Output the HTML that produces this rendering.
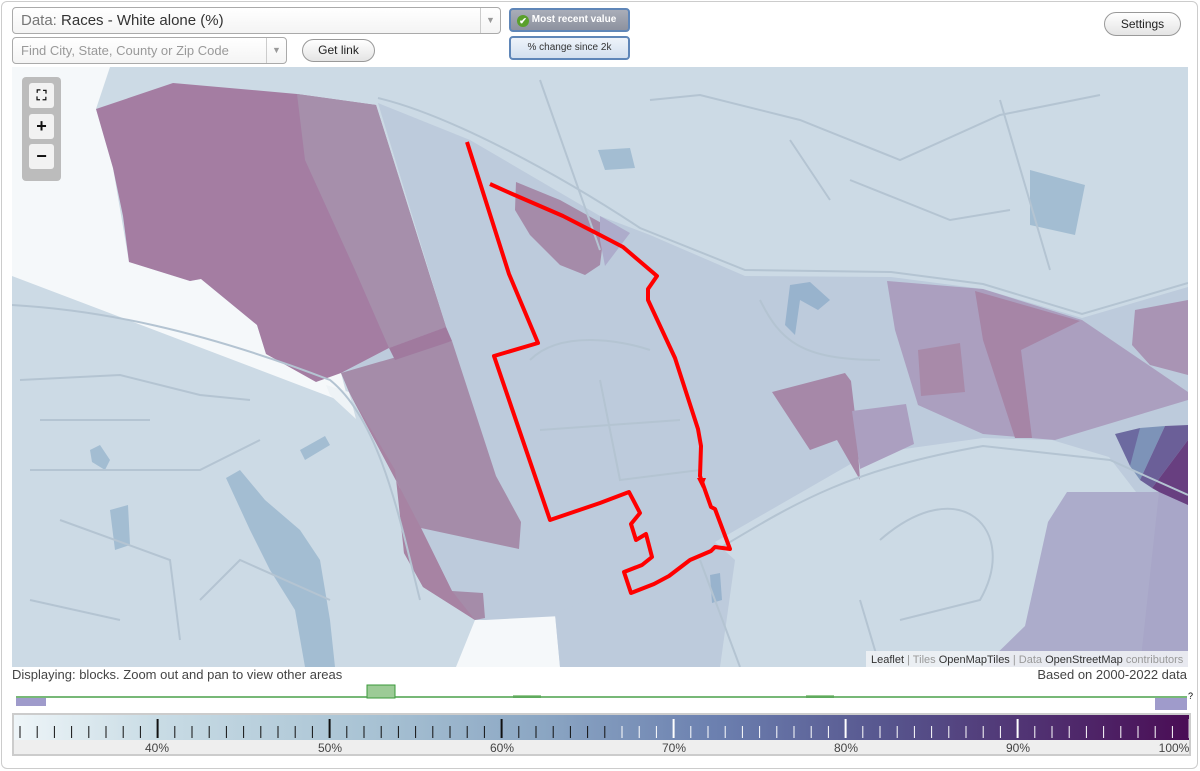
<!DOCTYPE html>
<html><head><meta charset="utf-8"><style>
*{box-sizing:border-box}
body{margin:0;width:1200px;height:771px;background:#fff;font-family:"Liberation Sans",sans-serif;position:relative;overflow:hidden}
.frame{position:absolute;left:1px;top:1px;width:1197px;height:768px;border:1px solid #ccc;border-radius:6px}
.abs{position:absolute}
.sel{border:1px solid #aaa;border-radius:4px;background:linear-gradient(#fff,#f4f4f4)}
.arr{position:absolute;right:0;top:0;bottom:0;width:20px;border-left:1px solid #ccc;color:#999;font-size:9px;text-align:center}
.btn{border:1px solid #999;border-radius:12px;background:linear-gradient(#fff,#e4e4e4);font-size:12px;text-align:center;color:#222}
.zb{position:absolute;left:7px;width:25px;height:25px;background:#f2f2f2;border-radius:3px;font-weight:bold;font-size:18px;text-align:center;line-height:24px;color:#111}
</style></head><body>
<div class="frame"></div>
<div class="abs sel" style="left:12px;top:7px;width:489px;height:27px;font-size:15px;line-height:25px;padding-left:8px"><span style="color:#777">Data:</span> <span style="color:#333">Races - White alone (%)</span><div class="arr" style="line-height:25px">▼</div></div>
<div class="abs sel" style="left:12px;top:37px;width:275px;height:27px;font-size:13px;line-height:25px;padding-left:8px;color:#999">Find City, State, County or Zip Code<div class="arr" style="line-height:25px">▼</div></div>
<div class="abs btn" style="left:302px;top:39px;width:73px;height:23px;line-height:21px">Get link</div>
<div class="abs" style="left:509px;top:8px;width:121px;height:24px;border:2px solid #5f86b8;border-radius:4px;background:linear-gradient(#a9adb8,#8d929f);color:#fff;font-size:10px;font-weight:bold;line-height:20px;padding-left:6px"><span style="display:inline-block;width:12px;height:12px;border-radius:6px;background:#5aa02c;color:#fff;font-size:9px;line-height:12px;text-align:center;vertical-align:-2px">✔</span> Most recent value</div>
<div class="abs" style="left:509px;top:36px;width:121px;height:24px;border:2px solid #5f86b8;border-radius:4px;background:linear-gradient(#eef3fa,#d3e0ef);color:#333;font-size:10px;line-height:20px;text-align:center">% change since 2k</div>
<div class="abs btn" style="left:1104px;top:12px;width:77px;height:24px;line-height:22px">Settings</div>

<svg class="abs" style="left:12px;top:67px" width="1176" height="600" viewBox="12 67 1176 600">
<rect x="12" y="67" width="1176" height="600" fill="#ccdae5"/>
<!-- white areas -->
<polygon points="12,67 110,67 96,109 113,168 129,262 190,281 201,279 257,325 266,354 341,373 349,404 12,276" fill="#f5f8fa"/>
<polygon points="326,385 349,392 356,419 330,395" fill="#eef3f6"/>
<polygon points="456,667 475,620 555,614 560,667" fill="#f5f8fa"/>
<!-- block region -->
<polygon points="378,103 470,140 600,216 650,235 745,276 891,277 983,289 1082,318 1188,287 1188,492 1136,492 1109,457 1052,440 983,438 868,454 715,542 600,614 485,620 475,620 452,591 421,528 400,488 395,455 349,392 341,373 389,348 446,327" fill="#bdcbdc"/>
<polygon points="555,614 715,542 735,560 720,667 560,667" fill="#bdcbdc"/>
<!-- lower right purple area -->
<polygon points="1067,492 1188,492 1188,667 983,667 1025,626 1048,522" fill="#acaccb"/>
<polygon points="1159,492 1188,505 1188,667 1140,667" fill="#a8a6c8"/>
<!-- left purples -->
<polygon points="96,109 173,83 297,94 376,105 446,327 389,348 341,373 316,382 266,354 257,325 201,279 190,281 129,262 123,216 113,168" fill="#a47da2"/>
<polygon points="297,94 376,105 446,327 389,348 355,270 305,160" fill="#a68fab"/>
<polygon points="341,373 452,341 496,476 521,522 519,549 421,528 452,591 483,593 485,618 475,620 423,587 404,553 400,488 349,392" fill="#a58ca9"/>
<polygon points="349,392 395,470 404,553 423,587 475,620 452,591 421,528 400,488" fill="#a783a3"/>
<polygon points="389,348 446,327 452,341 395,360" fill="#a07a9e"/>
<polygon points="516,182 560,200 605,225 600,265 585,275 560,265 530,235 515,210" fill="#a58ba9"/>
<polygon points="600,216 630,233 605,266 600,240" fill="#adaccb"/>
<!-- right purples -->
<polygon points="887,281 983,289 1082,320 1188,392 1188,400 1055,440 983,434 918,405 895,330" fill="#ab9fbf"/>
<polygon points="975,291 1080,321 1021,350 1032,438 1015,438 983,340" fill="#a685a6"/>
<polygon points="918,350 960,343 965,392 921,396" fill="#a88aa9"/>
<polygon points="772,392 845,373 851,381 856,423 860,480 837,440 810,450" fill="#a688a8"/>
<polygon points="852,411 906,404 914,444 860,469" fill="#ab9fc0"/>
<polygon points="1135,310 1188,300 1188,375 1150,365 1132,345" fill="#a994b4"/>
<polygon points="1115,434 1140,428 1150,432 1130,466" fill="#6c6aa0"/>
<polygon points="1140,428 1165,426 1140,480 1130,466" fill="#7d93b8"/>
<polygon points="1165,426 1188,425 1188,440 1152,488 1140,480" fill="#6b5f98"/>
<polygon points="1188,440 1188,505 1159,492 1152,488" fill="#683f80"/>
<!-- water -->
<polygon points="598,150 630,148 635,168 605,170" fill="#a3bdd2"/>
<polygon points="1030,170 1085,185 1075,235 1030,225" fill="#a3bdd2"/>
<polygon points="790,285 810,282 830,300 818,310 800,300 795,335 785,325" fill="#98b3cd"/>
<polygon points="226,478 240,470 265,500 300,530 320,560 330,620 335,667 305,667 295,610 270,570 250,530" fill="#a3bdd2"/>
<polygon points="110,510 128,505 130,545 115,550" fill="#a3bdd2"/>
<polygon points="300,450 325,436 330,445 305,460" fill="#a3bdd2"/>
<polygon points="90,450 100,445 110,460 105,470 92,462" fill="#a3bdd2"/>
<polygon points="710,575 720,573 722,600 712,603" fill="#98b3cd"/>
<!-- some roads -->
<g fill="none" stroke="#b4c4d2" stroke-width="2">
<path d="M378,98 C450,115 560,175 640,228 L745,270 L891,272 L983,284 L1082,314 L1188,283"/>
<path d="M12,305 C100,310 200,330 330,380 C380,420 400,520 420,600"/>
<path d="M20,380 L120,375 L200,395 L250,400 M40,420 L150,420 M30,470 L200,470 L260,440 M60,520 L170,560 L180,640 M30,600 L120,620 M200,600 L240,560 L330,600"/>
<path d="M720,548 C800,500 850,470 983,446 L1110,460 L1188,495"/>
<path d="M700,560 L740,667 M880,540 C960,470 1020,530 980,600 L900,620 M860,600 L880,667"/>
<path d="M650,100 L700,95 L800,120 L900,160 L1000,115 L1100,95 M850,180 L950,220 L1010,210 M790,140 L830,200 M1000,100 L1050,270 M540,80 L600,250"/>
<path d="M530,360 C560,330 620,340 650,350 M540,430 L680,420 M600,380 L620,480 L700,470 M760,300 C780,340 800,360 880,360"/>
</g>
<!-- route -->
<g fill="none" stroke="#f00" stroke-width="4" stroke-linejoin="round">
<path d="M467,142 L509,274 L538,343 L494,356 L550,520 L600,503 L629,492 L640,513 L631,524 L636,540 L646,534 L652,557 L642,565 L624,572 L631,593 L654,584 L669,576 L690,560 L711,551 L715,547 L730,549 L715,509 L711,507 L700,476 L701,446 L698,429 L675,358 L648,300 L648,289 L657,276 L623,247 L600,235 L563,216 L510,193 L490,184"/>
</g>
<polygon points="697,478 706,478 702,488" fill="#f00"/>
<rect x="866" y="651" width="322" height="16" fill="#eef1f4" opacity="0.9"/>
<text x="871" y="663" font-family="Liberation Sans" font-size="11" fill="#555"><tspan fill="#333">Leaflet</tspan> <tspan fill="#999">| Tiles</tspan> <tspan fill="#333">OpenMapTiles</tspan> <tspan fill="#999">| Data</tspan> <tspan fill="#333">OpenStreetMap</tspan> <tspan fill="#999">contributors</tspan></text>
</svg>
<div class="abs" style="left:22px;top:77px;width:39px;height:104px;background:#bcbcbc;border-radius:4px">
<div class="zb" style="top:6px;font-size:14px">⛶</div>
<div class="zb" style="top:37px">+</div>
<div class="zb" style="top:67px">−</div>
</div>

<div class="abs" style="left:12px;top:667px;font-size:13px;color:#444">Displaying: blocks. Zoom out and pan to view other areas</div>
<div class="abs" style="right:13px;top:667px;font-size:13px;color:#444">Based on 2000-2022 data</div>

<svg class="abs" style="left:0;top:680px" width="1200" height="32">
<rect x="16" y="18" width="30" height="8" fill="#9f9bcb"/>
<rect x="1155" y="18" width="32" height="12" fill="#9f9bcb"/>
<rect x="367" y="5" width="28" height="13" fill="#9ccb96" stroke="#3a9a3a"/>
<rect x="513" y="15" width="28" height="3" fill="#9ccb96"/>
<rect x="806" y="15" width="28" height="3" fill="#9ccb96"/>
<path d="M16,17 L367,17 M395,17 L1187,17" stroke="#4aa04a" stroke-width="1.5"/>
<text x="1188" y="19" font-size="9" font-family="Liberation Sans">?</text>
</svg>

<div class="abs" style="left:12px;top:713px;width:1179px;height:43px;border:2px solid #ccc;background:#eee">
<svg width="1175" height="39" style="display:block">
<defs><linearGradient id="g" x1="0" x2="1"><stop offset="0" stop-color="#eef5f8"/><stop offset="0.12" stop-color="#c9dce5"/><stop offset="0.3" stop-color="#a9c3d4"/><stop offset="0.45" stop-color="#8ba6c3"/><stop offset="0.6" stop-color="#6b7faf"/><stop offset="0.75" stop-color="#56538c"/><stop offset="1" stop-color="#4a0d55"/></linearGradient></defs>
<rect x="0" y="0" width="1175" height="25" fill="url(#g)"/>
<g id="t" stroke-width="1.5"></g>
<g font-family="Liberation Sans" font-size="12" fill="#444" text-anchor="middle">
<text x="143" y="37">40%</text><text x="316" y="37">50%</text><text x="488" y="37">60%</text><text x="660" y="37">70%</text><text x="832" y="37">80%</text><text x="1004" y="37">90%</text><text x="1160" y="37">100%</text></g>
</svg></div>
<script>
var g=document.getElementById('t'),s='';
for(var i=0;i<69;i++){var x=6+i*17.2;var maj=(i%10==8);var c=x<600?'#111':'#fff';
s+='<line x1="'+x+'" x2="'+x+'" y1="'+(maj?4:11)+'" y2="23" stroke="'+c+'" stroke-width="'+(maj?2:1)+'"/>';}
g.innerHTML=s;
</script>
</body></html>
